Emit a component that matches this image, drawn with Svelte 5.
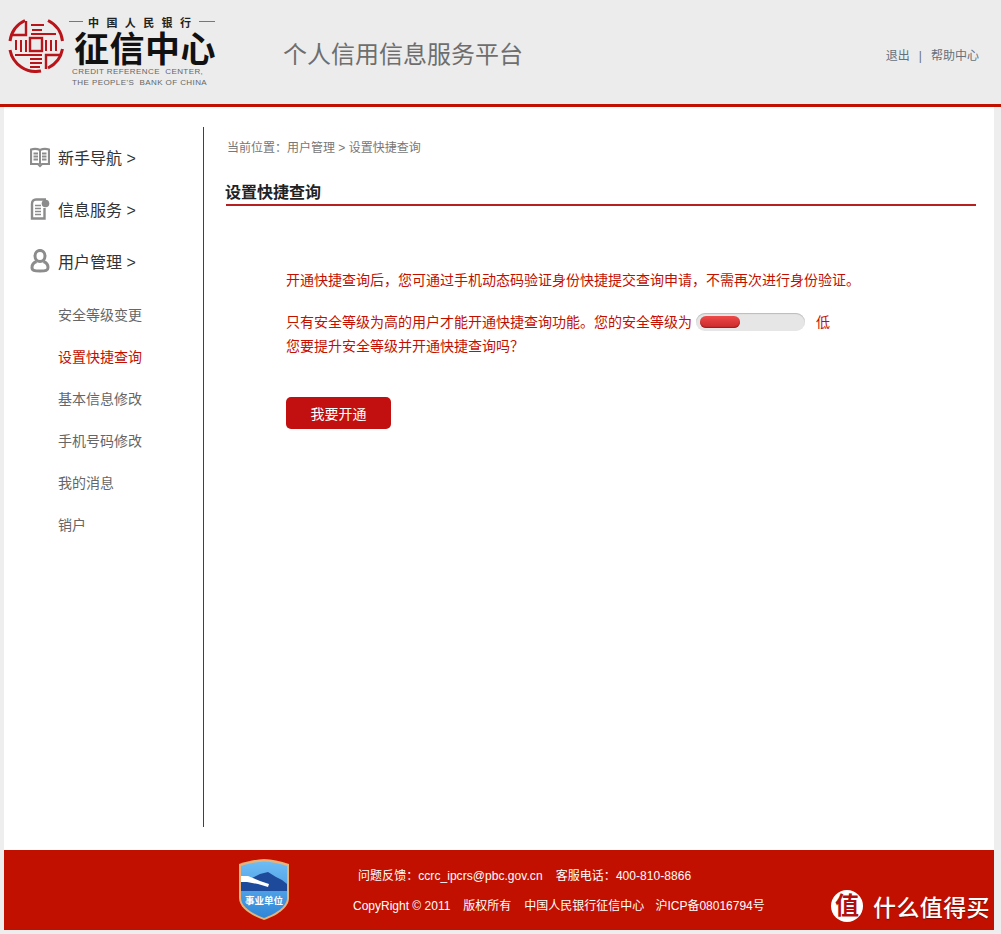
<script>
  const sections = [
    { id: 'book', label: '新手导航 >' },
    { id: 'doc', label: '信息服务 >' },
    { id: 'user', label: '用户管理 >' }
  ];
  const subs = ['安全等级变更', '设置快捷查询', '基本信息修改', '手机号码修改', '我的消息', '销户'];
  const active = '设置快捷查询';
</script>

<div class="page">
  <header class="header">
    <div class="logo">
      <svg class="seal" width="56" height="56" viewBox="0 0 56 56" fill="none" stroke="#b8141a" stroke-width="2">
        <path d="M17 3.500A26.500 26.500 0 0 0 2 24M2 33A26.500 26.500 0 0 0 33 54M40 3.500A26.500 26.500 0 0 1 54.500 24M54.500 32A26.500 26.500 0 0 1 40 51" stroke-width="3" />
        <path d="M18 4V18H3M38 52V38H53" stroke-width="2.400" />
        <rect x="22" y="21" width="12" height="13" stroke-width="2.400" />
        <path d="M23 8H36M24 13H34M23 17H48M8 23V33M13 23V35M18 23V35M38 23V34M43 23V34M48 23V34M7 38H34M22 42H34M22 46H34M22 50H32" />
      </svg>
      <div class="logo-text">
        <div class="bank"><i></i><span>中国人民银行</span><i class="right"></i></div>
        <div class="name">征信中心</div>
        <div class="en">CREDIT REFERENCE&nbsp; CENTER,<br />THE PEOPLE'S&nbsp; BANK OF CHINA</div>
      </div>
    </div>
    <div class="platform">个人信用信息服务平台</div>
    <div class="links">退出<span class="sep">|</span>帮助中心</div>
  </header>

  <main class="content">
    <nav class="side">
      {#each sections as s}
        <div class="section">
          <svg width="20" height="24" viewBox="0 0 20 24" fill="none" stroke="#8c8c8c" stroke-width="2">
            {#if s.id === 'book'}
              <path d="M1 4.500C4 3.500 7 3.500 10 5C13 3.500 16 3.500 19 4.500V19H12L10 21L8 19H1Z" stroke-width="2.200" />
              <path d="M10 5V19M3.500 8.500H8M3.500 11.500H8M3.500 14.500H8M12 8.500H16.500M12 11.500H16.500M12 14.500H16.500" stroke-width="2" />
            {:else if s.id === 'doc'}
              <path d="M14.500 11V21.500H2V7C2 4 3.500 2.500 6 2.500H16" stroke-width="2.400" />
              <circle cx="15.500" cy="6.500" r="3.800" fill="#8c8c8c" stroke="none" />
              <path d="M5 8.500H11M5 11.500H11M5 14.500H11M5 17.500H11" stroke-width="1.700" />
            {:else}
              <ellipse cx="10" cy="7" rx="5" ry="5.600" stroke-width="3" />
              <path d="M6.500 12.500C2.500 14 2 16 2 18.500C2 21.500 4 22 10 22C16 22 18 21.500 18 18.500C18 16 17.500 14 13.500 12.500" stroke-width="3" />
            {/if}
          </svg>
          <span>{s.label}</span>
        </div>
      {/each}
      <ul class="subs">
        {#each subs as item}
          <li class:active={item === active}>{item}</li>
        {/each}
      </ul>
    </nav>

    <section class="detail">
      <div class="crumb">当前位置：用户管理 &gt; 设置快捷查询</div>
      <h1 class="title">设置快捷查询</h1>
      <div class="body">
        <p class="first">开通快捷查询后，您可通过手机动态码验证身份快捷提交查询申请，不需再次进行身份验证。</p>
        <p class="level">
          只有安全等级为高的用户才能开通快捷查询功能。您的安全等级为
          <span class="meter"><span class="fill"></span></span>
          <span class="low">低</span>
        </p>
        <p class="ask">您要提升安全等级并开通快捷查询吗？</p>
        <button class="open">我要开通</button>
      </div>
    </section>
  </main>

  <footer class="footer">
    <svg class="badge" width="52" height="63" viewBox="0 0 52 63">
      <defs>
        <linearGradient id="sky" x1="0" y1="0" x2="0" y2="1">
          <stop offset="0" stop-color="#6fbcf5" />
          <stop offset="1" stop-color="#2f86d6" />
        </linearGradient>
      </defs>
      <path d="M1 6C10 3 18 1.500 26 1C34 1.500 42 3 51 6V40C51 50 38 58 26 62C14 58 1 50 1 40Z" fill="#e7b27a" />
      <path d="M3 8C11 5.500 18 4 26 3.500C34 4 41 5.500 49 8V40C49 49 37 56 26 60C15 56 3 49 3 40Z" fill="url(#sky)" />
      <path d="M3 19L12 21L22 16L30 14L38 19L44 22L49 26V33H3Z" fill="#1e4a9c" />
      <path d="M3 18L10 18L22 23L31 26L30 29L20 26L9 24L3 24Z" fill="#fff" />
      <text x="26" y="46" text-anchor="middle" class="badge-text">事业单位</text>
    </svg>
    <div class="contact">
      <div class="row-a">问题反馈：ccrc_ipcrs@pbc.gov.cn<span class="gap"></span>客服电话：400-810-8866</div>
      <div class="row-b">CopyRight © 2011<span class="gap"></span>版权所有<span class="gap"></span>中国人民银行征信中心<span class="gap-s"></span>沪ICP备08016794号</div>
    </div>
    <div class="mark">
      <span class="mark-dot">值</span>
      <span class="mark-text">什么值得买</span>
    </div>
  </footer>
</div>

<style>
  :global(body) {
    margin: 0;
    background: #eeeeee;
    font-family: "Liberation Sans", "Noto Sans CJK SC", sans-serif;
  }

  .page {
    width: 1001px;
    height: 934px;
    overflow: hidden;
  }

  .header {
    height: 104px;
    border-bottom: 3px solid #c21000;
    display: flex;
    align-items: flex-start;
    background: #ececec;
  }

  .logo {
    display: flex;
    width: 283px;
    flex: none;
    padding: 16px 0 0 8px;
    box-sizing: border-box;
  }

  .seal {
    flex: none;
    margin-right: 10px;
    margin-top: 1px;
  }

  .logo-text {
    width: 148px;
  }

  .bank {
    display: flex;
    align-items: center;
    height: 11px;
    margin-left: -5px;
    font-size: 11px;
    font-weight: 700;
    letter-spacing: 7.400px;
    color: #222;
    white-space: nowrap;
  }

  .bank span {
    margin: 0 1px 0 5px;
  }

  .bank i {
    width: 14px;
    border-top: 1px solid #777;
    flex: none;
  }

  .bank i.right {
    width: 16px;
  }

  .name {
    margin-top: 1px;
    font-size: 35px;
    line-height: 37px;
    font-weight: 700;
    letter-spacing: 0.500px;
    color: #111;
    white-space: nowrap;
    font-family: "Noto Sans CJK SC", sans-serif;
  }

  .en {
    margin: 1px 0 0 -2px;
    font-size: 8px;
    line-height: 11px;
    color: #666;
    letter-spacing: 0.420px;
    white-space: nowrap;
  }

  .platform {
    margin-top: 38px;
    font-size: 24px;
    line-height: 34px;
    color: #6e6e6e;
    white-space: nowrap;
  }

  .links {
    margin: 48px 22px 0 auto;
    font-size: 12px;
    line-height: 16px;
    color: #66707a;
    white-space: nowrap;
  }

  .sep {
    margin: 0 9px;
  }

  .content {
    margin: 0 7px 0 4px;
    height: 743px;
    background: #fff;
    display: flex;
    padding-top: 20px;
    box-sizing: border-box;
  }

  .side {
    width: 200px;
    height: 700px;
    flex: none;
    border-right: 1px solid #7a2a26;
    padding-top: 4px;
    box-sizing: border-box;
  }

  .section {
    height: 52px;
    display: flex;
    align-items: center;
    padding-left: 26px;
    gap: 8px;
    font-size: 16px;
    color: #333;
  }

  .subs {
    list-style: none;
    margin: 7px 0 0;
    padding: 0 0 0 54px;
  }

  .subs li {
    height: 42px;
    line-height: 42px;
    font-size: 14px;
    color: #666;
  }

  .subs li.active {
    color: #c21000;
  }

  .detail {
    flex: 1;
    padding: 0 18px 0 22px;
  }

  .crumb {
    font-size: 12px;
    line-height: 16px;
    margin-top: 13px;
    padding-left: 1px;
    color: #777;
  }

  .title {
    margin: 26px 0 0;
    padding-bottom: 0;
    font-size: 16px;
    line-height: 22px;
    font-weight: 700;
    text-indent: -1px;
    color: #222;
    border-bottom: 2px solid #b52020;
  }

  .body {
    padding: 63px 0 0 60px;
    font-size: 14px;
    color: #c21000;
  }

  .body p {
    margin: 0;
    line-height: 23px;
  }

  .first {
    margin-bottom: 19px !important;
  }

  .level {
    display: flex;
    align-items: center;
    white-space: nowrap;
  }

  .ask {
    padding-top: 1px;
  }

  .meter {
    width: 109px;
    height: 18px;
    margin: -2px 0 0 4px;
    border-radius: 9px;
    background: #e6e6e6;
    box-shadow: inset 0 1px 1px #bbb;
    display: flex;
    align-items: center;
    padding-left: 4px;
    box-sizing: border-box;
  }

  .fill {
    width: 40px;
    height: 12px;
    border-radius: 6px;
    background: linear-gradient(#ee4a4a, #c92a2a);
    box-shadow: inset 0 -1px 1px #a01c1c;
  }

  .low {
    margin-left: 11px;
  }

  .open {
    display: block;
    margin-top: 39px;
    width: 105px;
    height: 32px;
    border: 0;
    padding: 0;
    border-radius: 5px;
    background: #c21010;
    color: #fff;
    font: 14px "Liberation Sans", "Noto Sans CJK SC", sans-serif;
  }

  .footer {
    margin: 0 7px 0 4px;
    height: 80px;
    background: #c21000;
    display: flex;
    color: #fff;
    font-size: 12px;
  }

  .badge {
    flex: none;
    margin: 8px 0 0 234px;
  }

  .badge-text {
    font-size: 9.500px;
    font-weight: 700;
    fill: #fff;
  }

  .contact {
    width: 478px;
    flex: none;
    margin-left: 63px;
    white-space: nowrap;
  }

  .row-a {
    margin: 18px 0 0 5px;
    line-height: 16px;
    letter-spacing: 0.050px;
  }

  .row-b {
    margin-top: 14px;
    line-height: 16px;
  }

  .gap {
    display: inline-block;
    width: 13px;
  }

  .gap-s {
    display: inline-block;
    width: 11px;
  }

  .mark {
    display: flex;
    align-items: center;
    gap: 10px;
    height: 32px;
    margin: 40px 0 0 0;
    white-space: nowrap;
  }

  .mark-dot {
    width: 32px;
    height: 32px;
    border-radius: 50%;
    background: #fff;
    color: #b01010;
    font-size: 24px;
    line-height: 32px;
    font-weight: 700;
    text-align: center;
    flex: none;
  }

  .mark-text {
    font-size: 23px;
    font-weight: 500;
    letter-spacing: 0.400px;
    color: #fff;
    text-shadow: 0 1px 1px rgba(80, 0, 0, 0.6);
  }
</style>
